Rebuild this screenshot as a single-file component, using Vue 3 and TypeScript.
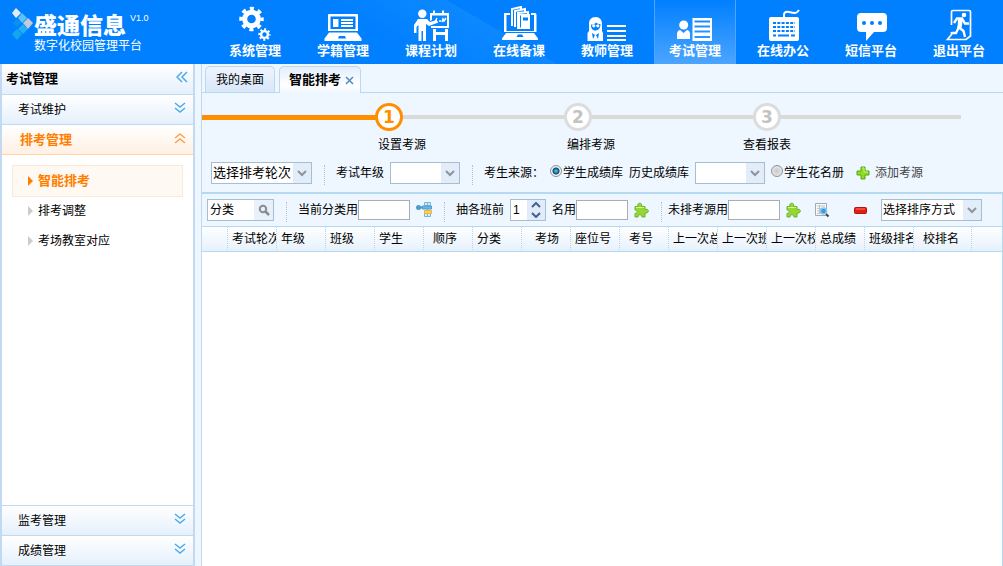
<script setup lang="ts">
import { ref } from 'vue'

interface NavItem { label: string; icon: string }
interface Column { label: string; indent: 'near' | 'mid' | 'far' }

const navItems: NavItem[] = [
  { label: '系统管理', icon: 'gears' },
  { label: '学籍管理', icon: 'laptop' },
  { label: '课程计划', icon: 'board' },
  { label: '在线备课', icon: 'books' },
  { label: '教师管理', icon: 'teacher' },
  { label: '考试管理', icon: 'exam' },
  { label: '在线办公', icon: 'keyboard' },
  { label: '短信平台', icon: 'chat' },
  { label: '退出平台', icon: 'exit' },
]
const activeNav = ref('考试管理')

const treeItems = ['智能排考', '排考调整', '考场教室对应']
const activeTree = ref('智能排考')

const steps = ['设置考源', '编排考源', '查看报表']
const currentStep = ref(0)

const columns: Column[] = [
  { label: '考试轮次', indent: 'near' },
  { label: '年级', indent: 'near' },
  { label: '班级', indent: 'near' },
  { label: '学生', indent: 'near' },
  { label: '顺序', indent: 'mid' },
  { label: '分类', indent: 'near' },
  { label: '考场', indent: 'far' },
  { label: '座位号', indent: 'near' },
  { label: '考号', indent: 'mid' },
  { label: '上一次总', indent: 'near' },
  { label: '上一次班', indent: 'near' },
  { label: '上一次校', indent: 'near' },
  { label: '总成绩', indent: 'near' },
  { label: '班级排名', indent: 'near' },
  { label: '校排名', indent: 'mid' },
]

const source = ref('score')
const topCount = ref(1)
const category = ref('分类')
</script>

<template>
  <div class="app">
    <header class="topbar">
      <div class="brand">
        <svg class="brand-mark" width="22" height="34" viewBox="0 0 22 34" aria-hidden="true">
          <path d="M4 0l5 5-5 5-4-5z" fill="#e6eaf0" />
          <path d="M10 5l5 5-5 5-4-5z" fill="#5cc4f4" />
          <path d="M16 10l5 5-5 6-5-6z" fill="#c3ccd6" />
          <path d="M5 11l4 4-4 4-4-4z" fill="#0a93ee" />
          <path d="M11 16l5 5-5 5-5-5z" fill="#25aef5" />
          <path d="M5 21l5 5-5 6-5-6z" fill="#12a9e8" />
        </svg>
        <div class="brand-text">
          <div class="brand-name">盛通信息<span class="version">V1.0</span></div>
          <div class="brand-sub">数字化校园管理平台</div>
        </div>
      </div>
      <nav class="nav">
        <a v-for="item in navItems" :key="item.label" href="#" class="nav-item"
           :class="{ active: item.label === activeNav }" @click.prevent="activeNav = item.label">
          <svg class="nav-icon" width="40" height="36" viewBox="0 0 40 36" fill="#fff" aria-hidden="true">
            <g v-if="item.icon === 'gears'" fill="none" stroke="#fff">
              <circle cx="16.500" cy="13" r="6.800" stroke-width="5" />
              <circle cx="16.500" cy="13" r="10.500" stroke-width="3.500" stroke-dasharray="4.123 4.123" stroke-dashoffset="2.060" />
              <circle cx="29.500" cy="28.500" r="3.400" stroke-width="2.400" />
              <circle cx="29.500" cy="28.500" r="5.200" stroke-width="2" stroke-dasharray="2.042 2.042" stroke-dashoffset="1" />
            </g>
            <g v-else-if="item.icon === 'laptop'">
              <path fill-rule="evenodd" d="M6 8h28q1 0 1 1v16H5V9q0-1 1-1zm1.500 2.500v12.500h25V10.500z" />
              <path fill-rule="evenodd" d="M10 13h5.500v8H10zM18 13h12v2H18zM18 16h12v2H18zM18 19h12v2H18z" />
              <path fill-rule="evenodd" d="M6 26.500h28l4.500 6v2.500h-37v-2.500zm10 3.500l-1 2.500h8L22 30z" />
            </g>
            <g v-else-if="item.icon === 'board'">
              <circle cx="11.300" cy="7.700" r="4.200" />
              <path d="M7 13h9l3 3 7-2v3l-8 3-3-2v17h-3v-10h-1.500v10h-3V19l-2 2v6H3v-8z" />
              <path fill-rule="evenodd" d="M19 7h3V4.500h2V7h7V4.500h2V7h5v15H20v-2h16V9.500H21V14l-2 1z" />
              <path fill="none" stroke="#fff" stroke-width="1.500" d="M26 12l-2 4h3M28 15h2M31 16l1-3 1 2 2-3" />
              <path d="M22 23h3v3h9v-3h3v12h-3v-6h-9v6h-3z" />
            </g>
            <g v-else-if="item.icon === 'books'">
              <path d="M5 7h6v2H7.500v16H35V9h-3V7h4q1.500 0 1.500 2v17H5z" />
              <path fill="none" stroke="#fff" stroke-width="2" d="M13 20V3l9-2v3M16 21V5l10-2v4M19 22V7l10-1v3" />
              <path fill-rule="evenodd" d="M18 8h13v15H18zm3 1.500v12h1v-12zm3 2v3h5v-3z" />
              <path fill-rule="evenodd" d="M7 27h28l4 5.500V34H3v-1.500zm12 1.500l-1.500 2.500h7L23 28.500z" />
            </g>
            <g v-else-if="item.icon === 'teacher'">
              <path fill-rule="evenodd" d="M8.500 11C4 11 2 14 2 18v7l-1.500 2v8H16v-8l-1-2v-7c0-4-2-7-6.500-7zM4 18.500c2 .5 4-.5 5-2 1 1.500 3 1.500 4.500 1.500 0 3-1.500 6.500-5 6.500S4 22 4 18.500zM5 27l1 6 2-4zM12 27l-1 6-2-4z" />
              <circle cx="6.800" cy="19.800" r="1.600" /><circle cx="10.800" cy="19.800" r="1.600" />
              <path d="M20 19h19v2H20zM20 24h19v2H20zM20 29h19v2H20zM20 33h19v2H20z" />
            </g>
            <g v-else-if="item.icon === 'exam'">
              <circle cx="8.700" cy="19" r="4.500" />
              <path d="M5 24l3.500 3 3.500-3c2 .5 3 2 3 4v5H2v-5c0-2 1-3.500 3-4z" />
              <path fill-rule="evenodd" d="M17.500 12H37v23H17.500zm2 2.500v2H35v-2zm0 5v2H35v-2zm0 5v2H35v-2zm0 5.500v2H35v-2z" />
            </g>
            <g v-else-if="item.icon === 'keyboard'">
              <path fill="none" stroke="#fff" stroke-width="2" d="M21 12V8q1-3 5-2t6 1 4-3" />
              <path fill-rule="evenodd" d="M8 11h26q2 0 2 2v20q0 2-2 2H8q-2 0-2-2V13q0-2 2-2z" />
              <path fill="none" stroke="#007fff" stroke-width="2" stroke-dasharray="3 1.300" d="M10 17h22M10 21h22M10 25h22" />
              <path fill="none" stroke="#007fff" stroke-width="2" d="M10 29.500h3M15 29.500h11M28 29.500h4" />
            </g>
            <g v-else-if="item.icon === 'chat'">
              <path d="M10 7h22q4 0 4 4v11q0 4-4 4H23l-8 9v-9h-5q-4 0-4-4V11q0-4 4-4z" />
              <g fill="#007fff"><circle cx="13" cy="17" r="2" /><circle cx="21" cy="17" r="2" /><circle cx="29" cy="17" r="2" /></g>
            </g>
            <g v-else>
              <path fill="none" stroke="#fff" stroke-width="1.700" d="M12.500 19V6q0-1.500 1.500-1.500h16q1.500 0 1.500 1.500v24L27 33.500H8.500l4-5V26" />
              <circle cx="25" cy="9" r="2.300" />
              <path fill="none" stroke="#fff" stroke-width="2.400" d="M15 17l3-4.500h5l3 5h4M22 13l-2.500 8 5 4 1.500 6M20 21l-3 6h-4.500" />
              <path d="M19 13h5l-1.500 9h-4z" />
            </g>
          </svg>
          <span>{{ item.label }}</span>
        </a>
      </nav>
    </header>

    <div class="body">
      <aside class="sidebar">
        <div class="side-title">
          <span>考试管理</span>
          <button type="button" class="chev" aria-label="收起">
            <svg width="12" height="12" viewBox="0 0 12 12"><path d="M6 1L1 6l5 5M11 1L6 6l5 5" /></svg>
          </button>
        </div>
        <button type="button" class="panel-head">
          <span>考试维护</span>
          <svg class="chev" width="12" height="12" viewBox="0 0 12 12"><path d="M1 1l5 4 5-4M1 6l5 4 5-4" /></svg>
        </button>
        <button type="button" class="panel-head open">
          <span>排考管理</span>
          <svg class="chev" width="12" height="12" viewBox="0 0 12 12"><path d="M1 6l5-4 5 4M1 11l5-4 5 4" /></svg>
        </button>
        <ul class="tree">
          <li v-for="t in treeItems" :key="t">
            <a href="#" :class="{ active: t === activeTree }" @click.prevent="activeTree = t">{{ t }}</a>
          </li>
        </ul>
        <button v-for="p in ['监考管理', '成绩管理']" :key="p" type="button" class="panel-head">
          <span>{{ p }}</span>
          <svg class="chev" width="12" height="12" viewBox="0 0 12 12"><path d="M1 1l5 4 5-4M1 6l5 4 5-4" /></svg>
        </button>
      </aside>

      <main class="main">
        <div class="tabs" role="tablist">
          <button type="button" role="tab" class="tab">我的桌面</button>
          <button type="button" role="tab" class="tab active" aria-selected="true">智能排考
            <svg width="9" height="9" viewBox="0 0 9 9"><path d="M1 1l7 7M8 1L1 8" /></svg>
          </button>
        </div>

        <ol class="steps">
          <li v-for="(s, i) in steps" :key="s" :class="{ current: i === currentStep, last: i === 2 }">
            <span class="dot">{{ i + 1 }}</span>
            <span class="step-label">{{ s }}</span>
          </li>
        </ol>

        <div class="toolbar filters">
          <span class="combo wide large">
            <select aria-label="选择排考轮次"><option>选择排考轮次</option></select>
            <svg class="arrow" width="18" height="20" viewBox="0 0 18 20"><path d="M5 8l4 4 4-4" /></svg>
          </span>
          <i class="sep"></i>
          <label for="grade">考试年级</label>
          <span class="combo">
            <select id="grade"><option></option></select>
            <svg class="arrow" width="18" height="20" viewBox="0 0 18 20"><path d="M5 8l4 4 4-4" /></svg>
          </span>
          <i class="sep"></i>
          <span>考生来源：</span>
          <label class="radio"><input v-model="source" type="radio" name="source" value="score">学生成绩库</label>
          <label for="history">历史成绩库</label>
          <span class="combo">
            <select id="history"><option></option></select>
            <svg class="arrow" width="18" height="20" viewBox="0 0 18 20"><path d="M5 8l4 4 4-4" /></svg>
          </span>
          <label class="radio"><input v-model="source" type="radio" name="source" value="roster">学生花名册</label>
          <button type="button" class="add">
            <svg width="14" height="14" viewBox="0 0 14 14"><path d="M5 1h4v4h4v4H9v4H5V9H1V5h4z" fill="#8fdc20" stroke="#55a51c" stroke-linejoin="round" /><path d="M6 2h2v4h4" fill="none" stroke="#c4f36a" /></svg>
            添加考源
          </button>
        </div>

        <div class="toolbar actions">
          <span class="combo search">
            <input v-model="category" type="text" aria-label="分类">
            <button type="button" aria-label="搜索">
              <svg width="12" height="12" viewBox="0 0 12 12"><circle cx="5" cy="5" r="3.200" fill="none" stroke="#8c8c8c" stroke-width="2" /><path d="M7 7l4 4" stroke="#8c8c8c" stroke-width="2.500" /></svg>
            </button>
          </span>
          <i class="sep"></i>
          <label class="field">当前分类用<input type="text"></label>
          <button type="button" class="icon-btn" aria-label="分配分类">
            <svg width="16" height="16" viewBox="0 0 16 16">
              <path d="M8.500.5h6v3h-6zM8.500 11.500h6v3h-6zM11.500 .5v14" fill="#d9effb" stroke="#77b4dc" />
              <path d="M3 5.500h5" stroke="#4a94c8" stroke-width="2" /><circle cx="2.500" cy="5.500" r="2.500" fill="#4b9bd0" />
              <path d="M6.500 4h9v3h-9z" fill="#6db5e6" stroke="#4b9bd0" />
              <path d="M8.500 8.500h7v3h-7z" fill="#ffd34d" stroke="#e6b53c" />
            </svg>
          </button>
          <i class="sep"></i>
          <label for="top">抽各班前</label>
          <span class="combo spinner">
            <input id="top" v-model="topCount" type="number">
            <span class="spin">
              <button type="button" aria-label="增加" @click="topCount++"><svg width="10" height="6" viewBox="0 0 10 6"><path d="M1 5l4-4 4 4" /></svg></button>
              <button type="button" aria-label="减少" @click="topCount--"><svg width="10" height="6" viewBox="0 0 10 6"><path d="M1 1l4 4 4-4" /></svg></button>
            </span>
          </span>
          <label class="field">名用<input type="text"></label>
          <button type="button" class="icon-btn" aria-label="添加名次">
            <svg width="15" height="16" viewBox="0 0 15 16"><path class="puzzle" d="M1 4.500h3c-1.500-4.500 5-4.500 3.500 0H11v3c4.500-1.500 4.500 4.500 0 3.500v4H8c0-3-4-3-4 0H1v-3.500c3 0 3-3.500 0-3.500z" /><path d="M2 5.500h8" stroke="#d6f58b" /></svg>
          </button>
          <i class="sep tight"></i>
          <label class="field">未排考源用<input type="text"></label>
          <button type="button" class="icon-btn" aria-label="添加未排考源">
            <svg width="15" height="16" viewBox="0 0 15 16"><path class="puzzle" d="M1 4.500h3c-1.500-4.500 5-4.500 3.500 0H11v3c4.500-1.500 4.500 4.500 0 3.500v4H8c0-3-4-3-4 0H1v-3.500c3 0 3-3.500 0-3.500z" /><path d="M2 5.500h8" stroke="#d6f58b" /></svg>
          </button>
          <button type="button" class="icon-btn preview" aria-label="预览">
            <svg width="16" height="16" viewBox="0 0 16 16">
              <path d="M1.500 1.500h11v12h-11z" fill="#f8f8f8" stroke="#a6a9ad" /><path d="M3 4h8M3 6.500h8M3 9h8M3 11.500h8M5.500 3v9" stroke="#bfc3c8" />
              <path d="M12 12l2.500 2.500" stroke="#444" stroke-width="2" /><circle cx="9.500" cy="9" r="3" fill="#389be4" stroke="#8ac8ef" stroke-width="1.500" />
            </svg>
          </button>
          <button type="button" class="icon-btn remove" aria-label="移除">
            <svg width="13" height="7" viewBox="0 0 13 7"><rect x=".5" y=".5" width="12" height="6" rx="1" fill="#e31d10" stroke="#b8130d" /><path d="M2 2h9" stroke="#ff7a62" /></svg>
          </button>
          <span class="combo wide">
            <select aria-label="排序方式"><option>选择排序方式</option></select>
            <svg class="arrow" width="18" height="20" viewBox="0 0 18 20"><path d="M5 8l4 4 4-4" /></svg>
          </span>
        </div>

        <div class="grid">
          <table>
            <colgroup>
              <col class="c-index"><col v-for="n in 14" :key="n" class="c-std"><col class="c-last"><col>
            </colgroup>
            <thead>
              <tr>
                <th></th>
                <th v-for="c in columns" :key="c.label" :class="c.indent">{{ c.label }}</th>
                <th></th>
              </tr>
            </thead>
          </table>
        </div>
      </main>
    </div>
  </div>
</template>

<style>
body { margin: 0; }
</style>

<style scoped>
* { box-sizing: border-box; }
.app {
  display: flex;
  flex-direction: column;
  height: 100vh;
  font: 12px/16px "Liberation Sans", "Noto Sans CJK SC", sans-serif;
  color: #000;
  background: #eef6ff;
  white-space: nowrap;
}
button, input, select { font: inherit; color: inherit; margin: 0; }
button { border: 0; padding: 0; background: none; cursor: pointer; }
svg { display: block; flex: none; }
a { color: inherit; text-decoration: none; }

.topbar {
  display: flex;
  flex: none;
  justify-content: space-between;
  height: 64px;
  color: #fff;
  background: linear-gradient(210deg, #007fff 0 50%, #0d88ff 50%, #007fff 62%);
}
.brand { display: flex; padding: 8px 0 0 12px; }
.brand-text { padding: 5px 0 0; }
.brand-name { display: flex; font-size: 23px; font-weight: 900; line-height: 26px; }
.version { font-size: 9px; font-weight: 400; line-height: 10px; margin-left: 4px; }
.brand-sub { line-height: 14px; }
.nav { display: flex; }
.nav-item {
  display: flex;
  flex-direction: column;
  align-items: center;
  width: 82px;
  margin: 0 3px;
  padding-top: 6px;
  font-size: 13px;
  font-weight: 700;
  line-height: 18px;
}
.nav-item.active {
  background: linear-gradient(#007fff, #4ca5ff);
  border: solid #4ea6ff;
  border-width: 0 1px;
}

.body { display: flex; flex: 1; min-height: 0; }
.sidebar {
  display: flex;
  flex: none;
  flex-direction: column;
  width: 195px;
  margin-right: 6px;
  border: solid #c1daf2;
  border-width: 0 2px 1px;
  background: #fff;
}
.side-title, .panel-head {
  display: flex;
  flex: none;
  align-items: center;
  justify-content: space-between;
  height: 30px;
  padding: 0 7px 0 16px;
  background: linear-gradient(#fff, #e5f0fc);
  border-top: 1px solid #bfd9f1;
}
.side-title { border-top: 0; padding: 0 5px 0 4px; font-size: 13px; font-weight: 700; }
.chev { fill: none; stroke: #4fabe6; stroke-width: 1.500; }
.side-title .chev, .panel-head .chev { margin-bottom: 4px; }
.panel-head.open {
  height: 31px;
  padding-left: 18px;
  color: #ff7e00;
  font-size: 13px;
  font-weight: 700;
  background: linear-gradient(#fff, #fff0e2);
  border-bottom: 1px solid #ffd5a8;
}
.open .chev { stroke: #ffa24e; }
.tree { flex: 1; margin: 0; padding: 10px; list-style: none; overflow: auto; }
.tree a { display: flex; align-items: center; gap: 5px; height: 30px; padding-left: 16px; }
.tree a::before { content: ""; border: solid transparent; border-width: 5px 0 5px 5px; border-left-color: #ccc; }
.tree a.active {
  height: 32px;
  margin-bottom: -1px;
  padding-left: 15px;
  color: #ff7e00;
  font-size: 13px;
  font-weight: 700;
  background: #fff9f3;
  border: 1px solid #fbe9d8;
}
.tree a.active::before { border-left-color: #ff7e00; }

.main { display: flex; flex: 1; flex-direction: column; min-width: 0; border-left: 1px solid #bfd9f1; }
.tabs { display: flex; gap: 4px; flex: none; height: 29px; padding: 2px 3px 0; border-bottom: 1px solid #b9d8f2; }
.tab {
  display: flex;
  align-items: center;
  gap: 4px;
  height: 26px;
  padding: 0 10px;
  border: 1px solid #b9d8f2;
  border-bottom: 0;
  border-radius: 5px 5px 0 0;
  background: linear-gradient(#edf4fd, #d9e7fa);
}
.tab.active { height: 27px; padding: 0 6px 0 9px; font-size: 13px; font-weight: 700; background: linear-gradient(#e3eefc, #fff 70%, #eef6ff); }
.tab svg { fill: none; stroke: #4e8bc5; stroke-width: 1.500; }

.steps {
  display: flex;
  flex: none;
  height: 61px;
  margin: 0 42px 0 0;
  padding: 10px 0 0 173px;
  list-style: none;
  background:
    linear-gradient(#ff8f00, #ff8f00) 0 22px / 180px 5px no-repeat,
    linear-gradient(#dadada, #dadada) 0 22px / 100% 4px no-repeat;
}
.steps li { width: 189px; }
.dot {
  display: flex;
  align-items: center;
  justify-content: center;
  width: 28px;
  height: 28px;
  border: 3px solid #dcdcdc;
  border-radius: 50%;
  background: #fff;
  color: #c2c2c2;
  font-family: "DejaVu Sans", sans-serif;
  font-size: 17px;
  font-weight: 700;
}
.current .dot { border-color: #ff8f00; color: #ff8f00; }
.step-label { display: block; margin: 6px 0 0 3px; }
.last .step-label { margin-left: -10px; }

.toolbar { display: flex; flex: none; align-items: center; gap: 6px; }
.filters { height: 38px; padding-left: 9px; }
.actions { height: 34px; padding: 0 0 0 5px; border-top: 2px solid #b5d9f0; border-right: 1px solid #b5d9f0; }
.sep { align-self: center; height: 20px; margin: 4px 5px 0 6px; border-left: 1px dotted #b4c0cc; }
.sep.tight { margin-right: 0; }
.combo { position: relative; display: flex; width: 70px; height: 22px; border: 1px solid #a4bed4; background: #fff; }
.combo.wide { width: 101px; }
.combo select { width: 100%; padding: 0 18px 0 1px; border: 0; background: #fff; appearance: none; }
.combo.large select { font-size: 13px; }
.arrow { position: absolute; top: 0; right: 0; background: #e3edf9; fill: none; stroke: #8f949b; stroke-width: 2; pointer-events: none; }
.radio { display: flex; align-items: center; gap: 1px; }
.radio input {
  width: 12px;
  height: 12px;
  margin-bottom: 4px;
  border: 1px solid #8c9298;
  border-radius: 50%;
  appearance: none;
  background: radial-gradient(#c8c8c8, #f2f2f2);
}
.radio input:checked { background: radial-gradient(#38b2e8 0 1px, #104468 3px, #f2f2f2 4px); }
.add { display: flex; align-items: center; gap: 5px; margin-left: 6px; color: #444; }

.search { width: 67px; }
.combo input { flex: 1; min-width: 0; padding: 0 2px; border: 0; background: #fff; outline: 0; }
.search button { display: flex; align-items: center; justify-content: center; width: 19px; background: #e8f1fb; }
.spinner { width: 36px; }
.spinner input { appearance: textfield; }
.spinner input::-webkit-inner-spin-button { appearance: none; }
.spin { display: flex; flex-direction: column; width: 18px; background: #e0ecf9; }
.spin button { display: flex; flex: 1; align-items: center; justify-content: center; }
.spin path { fill: none; stroke: #465f8c; stroke-width: 2; }
.field { display: flex; align-items: center; }
.field input { width: 52px; height: 20px; border: 1px solid #abadb3; background: #fff; }
.puzzle { fill: #96d735; stroke: #6bb52c; }
.preview { margin-left: 7px; }
.remove { margin: 0 8px 0 18px; }

.grid { flex: 1; min-height: 0; border-top: 1px solid #b5d9f0; border-right: 1px solid #b5d9f0; background: #fff; overflow: hidden; }
table { width: 100%; table-layout: fixed; border-collapse: separate; border-spacing: 0; }
.c-index { width: 26px; }
.c-std { width: 49px; }
.c-last { width: 58px; }
th {
  height: 25px;
  padding: 0;
  font-weight: 400;
  text-align: left;
  overflow: hidden;
  background: linear-gradient(#fff, #e6f1fc);
  border-right: 1px dotted #b4d5ec;
  border-bottom: 1px solid #b5d9f0;
}
th:last-child { border-right: 0; }
.near { padding-left: 4px; }
.mid { padding-left: 9px; }
.far { padding-left: 13px; }
</style>
